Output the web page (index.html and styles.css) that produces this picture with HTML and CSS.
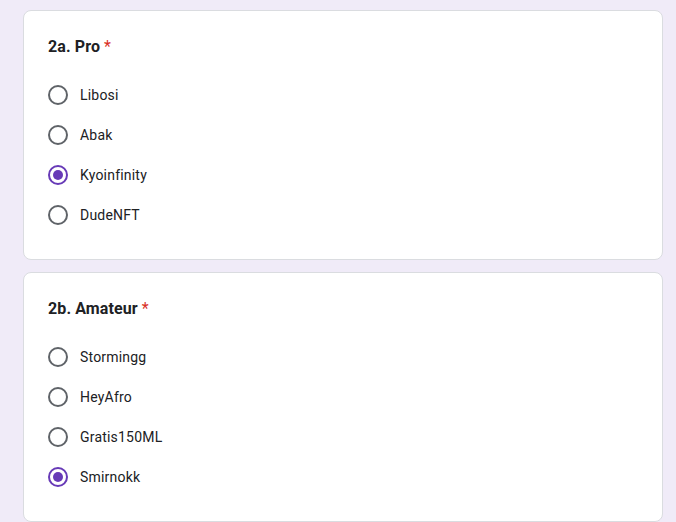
FILE: index.html
```html
<!DOCTYPE html>
<html>
<head>
<meta charset="utf-8">
<link rel="stylesheet" href="styles.css">
</head>
<body>
<div class="page">
  <section class="card">
    <div class="title">2a. Pro <span class="req">*</span></div>
    <div class="options">
      <div class="opt"><span class="radio"></span><span class="label">Libosi</span></div>
      <div class="opt"><span class="radio"></span><span class="label">Abak</span></div>
      <div class="opt"><span class="radio checked"></span><span class="label">Kyoinfinity</span></div>
      <div class="opt"><span class="radio"></span><span class="label">DudeNFT</span></div>
    </div>
  </section>
  <section class="card">
    <div class="title">2b. Amateur <span class="req">*</span></div>
    <div class="options">
      <div class="opt"><span class="radio"></span><span class="label">Stormingg</span></div>
      <div class="opt"><span class="radio"></span><span class="label">HeyAfro</span></div>
      <div class="opt"><span class="radio"></span><span class="label">Gratis150ML</span></div>
      <div class="opt"><span class="radio checked"></span><span class="label">Smirnokk</span></div>
    </div>
  </section>
</div>
</body>
</html>
```
FILE: styles.css
```css
html, body {
  margin: 0;
  padding: 0;
  background: #f0ebf8;
  font-family: Roboto, "Liberation Sans", Arial, sans-serif;
  color: #202124;
}
.page {
  padding: 10px 0 0 23px;
  display: flex;
  flex-direction: column;
  gap: 12px;
}
.card {
  box-sizing: border-box;
  width: 640px;
  height: 250px;
  background: #fff;
  border: 1px solid #dadce0;
  border-radius: 8px;
  padding: 24px 24px 24px 24px;
}
.title {
  font-size: 16px;
  font-weight: 700;
  line-height: 24px;
  letter-spacing: 0.1px;
}
.req {
  color: #d93025;
  font-weight: 400;
}
.options {
  margin-top: 16px;
  display: flex;
  flex-direction: column;
}
.opt {
  height: 40px;
  display: flex;
  align-items: center;
  gap: 12px;
}
.radio {
  box-sizing: border-box;
  width: 20px;
  height: 20px;
  border: 2px solid #5f6368;
  border-radius: 50%;
  display: flex;
  align-items: center;
  justify-content: center;
  flex-shrink: 0;
}
.radio.checked {
  border-color: #673ab7;
}
.radio.checked::after {
  content: "";
  width: 10px;
  height: 10px;
  border-radius: 50%;
  background: #673ab7;
}
.label {
  font-size: 14px;
  line-height: 20px;
  letter-spacing: 0.2px;
}
```
